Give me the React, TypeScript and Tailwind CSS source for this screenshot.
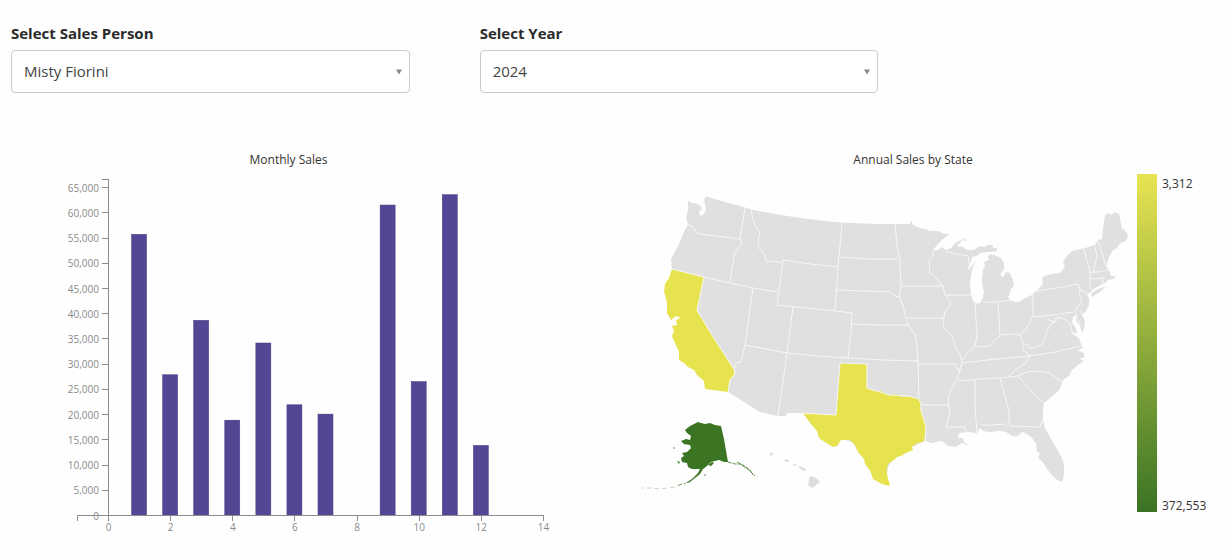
import { useState } from "react";

const people = ["Misty Fiorini", "Carla Jennings", "Devon Price"];
const years = ["2024", "2023", "2022"];

const monthlySales = [
  { month: 1, total: 55750 },
  { month: 2, total: 27900 },
  { month: 3, total: 38700 },
  { month: 4, total: 18900 },
  { month: 5, total: 34200 },
  { month: 6, total: 21950 },
  { month: 7, total: 20100 },
  { month: 9, total: 61550 },
  { month: 10, total: 26550 },
  { month: 11, total: 63600 },
  { month: 12, total: 13900 },
];

const yTicks = Array.from({ length: 14 }, (_, i) => i * 5000);
const xTicks = [0, 2, 4, 6, 8, 10, 12, 14];

const xScale = (month: number) => 108.5 + month * 31.07;
const yScale = (total: number) => 515.5 - (total / 5000) * 25.22;

const mainland =
  "M688 200.5L692 203L696 203.5L701 206L702 209L699 212L700 216L704 214L706 210L705 204L704 200L706 196.5L725 202L745 207.5L751 209.5L775 214L797 217.5L820 220.5L842 222.5L875 224L895 224L910 224L911 220L913 225L920 228L926 229L930 231L938 231L944 234L950 234L944 238L938 244L933 250L938 250L942 247L946 250L951 248L955 243L963 239L960 243L957 246L963 247L967 250L974 250L980 246L984 247L988 245L993 245L993 248L997 248L997 251L991 252L986 252L980 253L976 257L973 256L971 262L967 271L971 267L976 260L973 267L971 275L970 285L971 295L973 301L977 304L980 303L983 298L984 292L982 285L982 277L983 270L985 266L984 262L989 260L988 256L994 255L1001 258L1004 263L1004 269L1001 273L1001 277L1004 276L1006 272L1010 273L1013 280L1014 286L1011 289L1010 294L1008 297L1011 301L1019 302L1025 298L1032 295L1038 289L1043 284L1042 277L1051 274L1060 273L1065 267L1063 262L1066 257L1072 251L1085 248L1095 245L1098 240L1102 239L1103 229L1105 215L1108 213L1111 215L1115 212L1119 214L1122 229L1124 229L1127 233L1128 238L1124 242L1120 243L1117 248L1113 250L1109 257L1107 264L1107 268L1110 272L1111 276L1116 276L1113 279L1108 280L1105 283L1099 286L1092 290L1090 293L1087 294L1089 299L1089 305L1086 311L1083 314L1079 309L1083 317L1085 321L1084 329L1082 333L1080 326L1076 321L1076 315L1073 317L1072 323L1076 328L1077 334L1070 331L1074 335L1079 338L1081 344L1083 348L1077 350L1084 353L1084 358L1078 358L1084 361L1078 365L1072 370L1069 376L1063 380L1060 389L1055 394L1049 399L1044 403L1043 410L1043 420L1045 428L1051 439L1057 449L1062 458L1064 465L1064 475L1062 482L1057 480L1052 475L1047 469L1042 461L1038 458L1040 453L1037 452L1036 443L1032 438L1027 434L1022 432L1018 436L1012 436L1006 432L1000 431L989 432L983 431L980 428L977 433L968 432L959 433L958 438L963 438L964 442L970 446L962 443L956 447L948 446L942 441L932 443L925 441L912 447L905 453L898 456L892 461L888 467L887 475L889 485L882 483L874 479L871 472L866 465L864 459L857 450L853 443L846 440L840 440L837 446L833 447L825 442L820 439L817 431L811 424L803 413L787 413L786 416L778 416L760 412L728 392L733 368L697 311L704 277L672 269L671 259L678 246L684 232L688 224L686 218L688 210Z";

const california =
  "M672 269L704 277.500L697 311L714 338L733 368L735 374L730 380L728 392L705 389L704 381L697 375L694 370L688 367L684 363L679 360L679 352L675 343L672 336L674 331L672 326L677 325L676 320L681 318L676 316L671 320L667 313L667 303L664 291L665 284L669 278Z";

const texas =
  "M840 363L867 364L867 388L874 391L881 391L889 395L896 394L902 397L910 396L920 399L921 411L924 418L926 427L924 441L916 444L912 447L913 450L906 453L901 456L897 457L894 460L889 463L887 468L887 475L890 486L882 484L873 479L870 470L865 464L864 459L858 452L855 445L850 440L841 440L837 446L833 447L825 442L819 438L817 431L811 424L803 413L836 415Z";

const stateLines = [
  // northwest and mountain states
  "M688 225L693 227L697 233L706 235L717 236L740 239",
  "M745 208L740 239L742 243L736 251L734 256L732 269L730 282",
  "M672 269L704 277L730 283L753 288L777 292",
  "M751 209L753 220L756 227L760 233L758 240L759 248L764 254L767 262L774 261L781 263",
  "M783 260L810 264L838 267M783 260L777 305M777 305L806 308L835 311L852 313",
  "M842 223L838 267L835 311M704 277L697 310L715 340L734 369",
  "M753 288L745 345L741 362L736 363L734 369L735 374L730 380L728 392",
  "M745 345L787 353L817 356L848 358M793 307L787 353L778 416",
  // plains
  "M852 313L851 333L848 358M841 257L870 259L898 259M837 290L865 291L890 292L895 296L899 297",
  "M895 224L897 247L900 259L900 265L901 286L899 295L903 306L906 318L909 326L915 334L917 345L918 364",
  "M852 324L880 325L909 325M848 358L884 360L918 361M918 364L919 398",
  "M840 363L836 415L803 413M840 363L867 364L867 388L889 395L908 396L919 399L921 405",
  "M902 286L943 286M906 318L944 318M918 364L956 364L957 369L961 369M921 405L948 405",
  "M921 405L921 411L926 427L925 441",
  // mississippi river
  "M933 251L933 256L929 261L930 273L938 280L943 286L945 295L950 301L950 306L945 311L944 317L943 326L950 334L953 338L955 347L960 354L962 363L957 380L950 391L948 400L950 413L946 427L965 427L967 433",
  // great lakes and ohio valley
  "M945 295L972 295M945 251L956 254L968 256L970 266M975 303L977 335L975 346",
  "M962 360L968 352L975 346L984 347L990 345L995 340L1002 335L1010 334L1020 335",
  "M983 302L998 302L1010 300M998 302L1000 335M1033 295L1033 315L1030 322L1026 329L1020 335L1023 343L1030 347",
  "M962 363L987 360L1030 356L1055 352L1081 346M1030 356L1023 350L1023 343",
  "M1028 348L1034 348L1042 344L1045 339L1047 331L1051 324L1056 321L1061 317M1033 317L1053 315L1073 312",
  "M1047 319L1053 322L1058 317L1064 319L1070 323L1072 330",
  // south
  "M1030 356L1025 364L1015 370L1008 377M958 381L980 379L1000 378L1018 376L1024 373L1033 371L1045 372L1050 373L1062 382",
  "M975 380L975 408L977 432M1000 378L1005 397L1009 410L1009 420L1010 425M981 425L992 425L1007 424M1010 426L1040 427L1043 420",
  "M1018 376L1024 383L1032 392L1038 398L1044 403",
  // northeast
  "M1035 291L1057 288L1078 284L1080 289L1079 295L1082 301L1077 308L1075 312M1080 289L1087 293",
  "M1084 249L1087 261L1090 272L1090 290M1095 246L1097 256L1093 272M1098 241L1104 260L1107 267",
  "M1090 272L1100 272L1108 270M1091 279L1104 278M1102 279L1104 284M1075 312L1080 325",
];

const alaska =
  "M698 422L701 423L705 424L710 423L715 425L721 426L724 439L728 462L724 462L719 460L715 461L711 462L707 466L703 469L700 474L695 478L690 482L687 483L693 478L698 473L700 469L696 469L692 469L688 467L687 463L682 462L681 458L684 456L682 453L687 452L691 448L690 445L684 444L681 441L686 439L690 440L691 436L687 433L685 430L690 426L694 424Z";

function Field({
  id,
  label,
  value,
  options,
  onChange,
}: {
  id: string;
  label: string;
  value: string;
  options: string[];
  onChange: (value: string) => void;
}) {
  return (
    <div>
      <label htmlFor={id} className="block text-[15px] leading-5 font-bold text-[#2b2b2b]">
        {label}
      </label>
      <div className="relative mt-[7px]">
        <select
          id={id}
          value={value}
          onChange={(e) => onChange(e.target.value)}
          className="block h-[43px] w-full appearance-none rounded-[4px] border border-[#cbcbcb] bg-white pr-8 pl-3 text-[15px] text-[#444]"
        >
          {options.map((option) => (
            <option key={option}>{option}</option>
          ))}
        </select>
        <svg
          viewBox="0 0 6 6"
          className="pointer-events-none absolute top-[19px] right-2 size-[6px] fill-[#888]"
          aria-hidden="true"
        >
          <path d="M0 0.500H6L3 5.500Z" />
        </svg>
      </div>
    </div>
  );
}

function MonthlySales() {
  return (
    <figure>
      <figcaption className="text-center text-xs leading-4 text-[#333]">Monthly Sales</figcaption>
      <svg viewBox="11 174 555 366" className="mt-1.5 block w-full" role="img" aria-label="Monthly Sales">
        <g className="fill-[#8a8a8a] text-[10px]">
          {yTicks.map((tick) => (
            <text key={tick} x={99} y={yScale(tick) + 4} textAnchor="end">
              {tick.toLocaleString("en-US")}
            </text>
          ))}
          {xTicks.map((tick) => (
            <text key={tick} x={xScale(tick)} y={531} textAnchor="middle">
              {tick}
            </text>
          ))}
        </g>
        {monthlySales.map(({ month, total }) => (
          <rect
            key={month}
            x={xScale(month) - 8}
            y={yScale(total)}
            width={15}
            height={515.5 - yScale(total)}
            className="fill-[#524795] stroke-[#453b82]"
            strokeWidth={0.5}
          />
        ))}
        <g className="fill-none stroke-[#8c8c8c]" shapeRendering="crispEdges">
          <path d="M102 179.500H108.500V515.500M77.500 521V515.500H543.500V521" />
          {yTicks.map((tick) => (
            <path key={tick} d={`M102 ${yScale(tick)}H108.500`} />
          ))}
          {xTicks.map((tick) => (
            <path key={tick} d={`M${xScale(tick)} 515.500V521`} />
          ))}
        </g>
      </svg>
    </figure>
  );
}

function StateMap() {
  return (
    <svg viewBox="605 174 532 338" className="block min-w-0 flex-1" role="img" aria-label="Annual Sales by State">
      <path d={mainland} className="fill-[#e0e0e0]" />
      <path d="M1091 294L1096 290L1106 286L1100 292L1092 297Z" className="fill-[#e0e0e0]" />
      <path d="M963 238L967 240L964 241ZM988 257L990 254L993 256Z" className="fill-[#e0e0e0]" />
      <path d={california} className="fill-[#e7e34f]" />
      <path d={texas} className="fill-[#e7e34f]" />
      <g className="fill-none stroke-[#f7f7f7]" strokeLinejoin="round">
        {stateLines.map((line) => (
          <path key={line} d={line} />
        ))}
      </g>

      <g className="fill-[#3b7523]">
        <path d={alaska} />
        <path d="M708 465L712 462L714 463L711 466ZM673 447L675 448L674 449ZM677 461L680 462L679 464ZM704 475L706 474L705 476Z" />
        <path
          d="M728 462L735 464L740 464L746 468L751 472L755 476M737 462L743 465L750 470L753 475M690 481L684 484M682 484L677 486"
          className="fill-none stroke-[#3b7523]"
          strokeWidth={0.8}
          strokeDasharray="4 1"
        />
        <path
          d="M675 487L667 488L660 489L651 488L642 488"
          className="fill-none stroke-[#a9c09f]"
          strokeWidth={0.6}
          strokeDasharray="5 3"
        />
      </g>

      <path
        d="M769 454L772 452L773 454L771 456ZM784 460L787 459L789 462L786 462ZM793 464L798 465L794 466ZM798 467L801 466L801 469ZM801 467L806 469L805 471L801 470ZM810 476L816 478L820 482L815 486L812 488L808 485L809 480Z"
        className="fill-[#dcdcdc]"
      />
    </svg>
  );
}

function AnnualSales() {
  return (
    <figure>
      <figcaption className="text-center text-xs leading-4 text-[#333]">
        Annual Sales by State
      </figcaption>
      <div className="mt-1.5 flex items-stretch">
        <StateMap />
        <div className="flex w-[84px] gap-[5px]">
          <div className="w-5 bg-linear-to-b from-[#e8e452] via-[#8fad3c] to-[#3a7325]" />
          <div className="-mb-0.5 flex flex-col justify-between pt-0.5 text-xs leading-4 text-[#333]">
            <span>3,312</span>
            <span>372,553</span>
          </div>
        </div>
      </div>
    </figure>
  );
}

export default function App() {
  const [person, setPerson] = useState(people[0]);
  const [year, setYear] = useState(years[0]);

  return (
    <main className="min-h-screen bg-[#fefefe] px-[11px] pt-[23px] pb-3 font-['Open_Sans','Noto_Sans',sans-serif]">
      <div className="grid grid-cols-[19fr_19fr_13fr] gap-[70px]">
        <Field id="person" label="Select Sales Person" value={person} options={people} onChange={setPerson} />
        <Field id="year" label="Select Year" value={year} options={years} onChange={setYear} />
      </div>

      <div className="mt-[59px] grid grid-cols-[555fr_616fr] gap-[39px]">
        <MonthlySales />
        <AnnualSales />
      </div>
    </main>
  );
}
